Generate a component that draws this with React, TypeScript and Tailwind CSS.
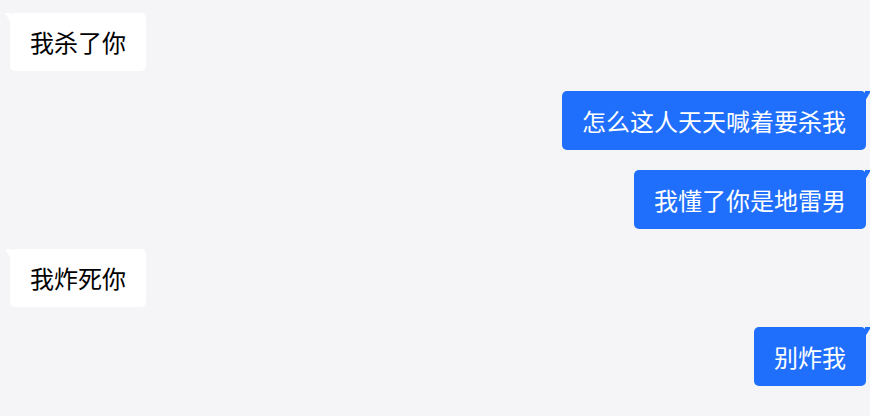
import React from "react";

type Msg = { text: string; me: boolean };

const messages: Msg[] = [
  { text: "我杀了你", me: false },
  { text: "怎么这人天天喊着要杀我", me: true },
  { text: "我懂了你是地雷男", me: true },
  { text: "我炸死你", me: false },
  { text: "别炸我", me: true },
];

function Bubble({ text, me }: Msg) {
  if (me) {
    return (
      <div className="flex justify-end">
        <div className="relative rounded-[5px] bg-[#1f6ffc] px-5 py-[13px] text-[24px] leading-[33px] text-white">
          {text}
          <span className="absolute top-0 right-[-5px] h-0 w-0 border-t-[10px] border-r-[6px] border-t-[#1f6ffc] border-r-transparent" />
        </div>
      </div>
    );
  }
  return (
    <div className="flex justify-start">
      <div className="relative rounded-[5px] bg-white px-5 py-[13px] text-[24px] leading-[32px] text-black">
        {text}
        <span className="absolute top-0 left-[-5px] h-0 w-0 border-t-[10px] border-l-[6px] border-t-white border-l-transparent" />
      </div>
    </div>
  );
}

export default function App() {
  return (
    <div
      className="h-[416px] w-[870px] overflow-hidden bg-[#f5f5f7] pt-[13px] pl-[10px] pr-[4px]"
      style={{ fontFamily: '"Noto Sans CJK SC", "Noto Sans", sans-serif' }}
    >
      <div className="flex flex-col gap-5">
        {messages.map((m, i) => (
          <Bubble key={i} {...m} />
        ))}
      </div>
    </div>
  );
}
